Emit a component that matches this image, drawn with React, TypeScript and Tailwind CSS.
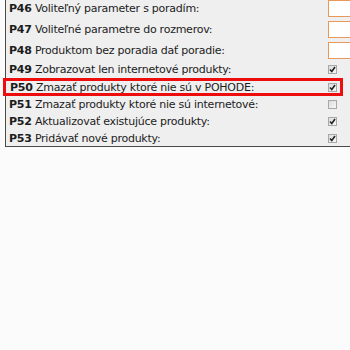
import React from "react";

type Row = { id: string; label: string; kind: "input" | "check" | "uncheck"; h: number; hl?: boolean };

const rows: Row[] = [
  { id: "P46", label: "Voliteľný parameter s poradím:", kind: "input", h: 21 },
  { id: "P47", label: "Voliteľné parametre do rozmerov:", kind: "input", h: 21 },
  { id: "P48", label: "Produktom bez poradia dať poradie:", kind: "input", h: 21 },
  { id: "P49", label: "Zobrazovat len internetové produkty:", kind: "check", h: 17 },
  { id: "P50", label: "Zmazať produkty ktoré nie sú v POHODE:", kind: "check", h: 18, hl: true },
  { id: "P51", label: "Zmazať produkty ktoré nie sú internetové:", kind: "uncheck", h: 17 },
  { id: "P52", label: "Aktualizovať existujúce produkty:", kind: "check", h: 17 },
  { id: "P53", label: "Pridávať nové produkty:", kind: "check", h: 17 },
];

function Box({ checked }: { checked: boolean }) {
  return (
    <span className="flex h-[9px] w-[9px] items-center justify-center border border-[#a8a8a8] bg-gradient-to-br from-[#dcdcdc] to-[#f8f8f8]">
      {checked && (
        <svg width="7" height="7" viewBox="0 0 7 7">
          <path d="M1 3.5 L2.8 5.5 L6 1" stroke="#222" strokeWidth="1.6" fill="none" />
        </svg>
      )}
    </span>
  );
}

export default function App() {
  return (
    <div className="h-[350px] w-[350px] overflow-hidden bg-[#fbfbfb]" style={{ fontFamily: "'DejaVu Sans', sans-serif" }}>
      <div className="mt-[-2px] ml-[5px] border-l border-b border-[#4a4a4a] bg-[#efefef] h-[149px]">
        {rows.map((r) => (
          <div
            key={r.id}
            className={
              "flex items-center " +
              (r.hl ? "border-[3px] border-[#ee0d0d] ml-[-3px] mr-[7px] pl-[4px]" : "pl-[3px]")
            }
            style={{ height: r.hl ? r.h : r.h }}
          >
            <div className="flex-1 whitespace-nowrap text-[11px] leading-none tracking-[-0.25px] text-[#1c1c1c]">
              <span className="font-bold">{r.id}</span> {r.label}
            </div>
            {r.kind === "input" ? (
              <div className="h-[17px] w-[40px] shrink-0 border border-[#e8995a] bg-white ml-auto mr-[-18px]" />
            ) : (
              <div className={"flex shrink-0 " + (r.hl ? "mr-[3px]" : "mr-[13px]")}>
                <Box checked={r.kind === "check"} />
              </div>
            )}
          </div>
        ))}
      </div>
    </div>
  );
}
